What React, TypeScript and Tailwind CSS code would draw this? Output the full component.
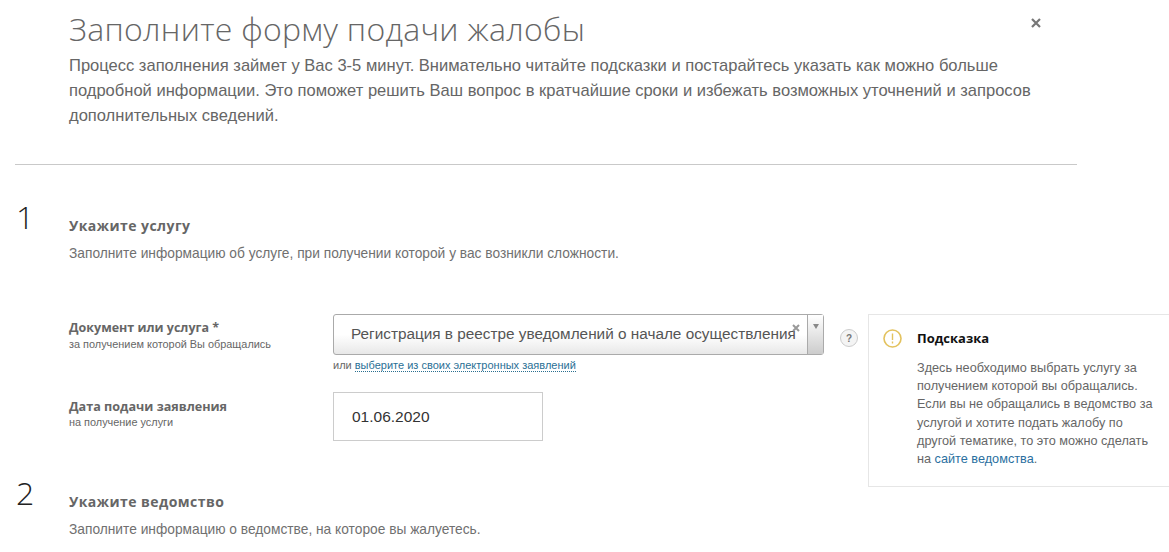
import React from "react";

const sans = "font-['Liberation_Sans',Arial,sans-serif]";
const head = "font-['Open_Sans','Noto_Sans',sans-serif]";

function SectionHead({ n, title, text }: { n: string; title: string; text: string }) {
  return (
    <div className="flex">
      <div className={`w-[69px] pl-[16px] text-[32px] leading-[32px] font-light text-[#222] ${head}`}>{n}</div>
      <div className="pt-[15px]">
        <div className={`text-[14px] leading-[20px] font-bold tracking-[0.45px] text-[#666] ${head}`}>{title}</div>
        <div className="mt-[8px] text-[13.75px] leading-[20px] text-[#707070]">{text}</div>
      </div>
    </div>
  );
}

export default function App() {
  return (
    <div className={`relative h-[552px] w-[1169px] overflow-hidden bg-white ${sans}`}>
      <header className="pl-[69px] pt-[7px]">
        <h1 className={`text-[32px] leading-[44px] font-light tracking-[0.3px] text-[#666] ${head}`}>Заполните форму подачи жалобы</h1>
        <p className="mt-[2px] whitespace-nowrap text-[16.55px] leading-[25px] text-[#666]">
          Процесс заполнения займет у Вас 3-5 минут. Внимательно читайте подсказки и постарайтесь указать как можно больше
          <br />подробной информации. Это поможет решить Ваш вопрос в кратчайшие сроки и избежать возможных уточнений и запросов
          <br />дополнительных сведений.
        </p>
      </header>
      <svg className="absolute left-[1031px] top-[18px] h-[10px] w-[10px]" viewBox="0 0 10 10" fill="none" stroke="#777" strokeWidth="2.2">
        <path d="M1 1l8 8M9 1l-8 8" />
      </svg>
      <hr className="ml-[15px] mt-[36px] w-[1062px] border-0 border-t border-[#c9c9c9]" />

      <div className="mt-[36px]">
        <SectionHead n="1" title="Укажите услугу" text="Заполните информацию об услуге, при получении которой у вас возникли сложности." />
      </div>

      <div className="mt-[50px] flex pl-[69px]">
        <div className="w-[264px] pt-[6px]">
          <div className={`text-[12.5px] leading-[16px] font-bold text-[#666] ${head}`}>Документ или услуга *</div>
          <div className="mt-[2px] text-[10.9px] leading-[13px] text-[#666]">за получением которой Вы обращались</div>
        </div>
        <div>
          <div className="relative flex h-[41px] w-[491px] rounded-[3px] border border-[#aaa] bg-gradient-to-b from-white via-white to-[#e8e8e8]">
            <div className="flex-1 overflow-hidden whitespace-nowrap pl-[17px] text-[15.33px] leading-[37px] text-[#555]">Регистрация в реестре уведомлений о начале осуществления</div>
            <div className="flex w-[16px] justify-center border-l border-[#aaa] bg-gradient-to-b from-white to-[#ccc] pt-[9px]">
              <div className="h-0 w-0 border-x-[3px] border-t-[5px] border-x-transparent border-t-[#888]" />
            </div>
            <svg className="absolute left-[458px] top-[9px] h-[8px] w-[8px]" viewBox="0 0 8 8" fill="none" stroke="#999" strokeWidth="2">
              <path d="M1 1l6 6M7 1L1 7" />
            </svg>
          </div>
          <div className="mt-[3px] text-[11px] leading-[14px] text-[#666]">
            или <span className="border-b border-dotted border-[#2a6f8f] text-[#2a6f95]">выберите из своих электронных заявлений</span>
          </div>
        </div>
        <div className="ml-[16px] mt-[15px] flex h-[18px] w-[18px] items-center justify-center rounded-full border border-[#ccc] bg-[#f4f4f4] text-[10px] font-bold text-[#777]">?</div>
      </div>

      <div className="mt-[20px] flex pl-[69px]">
        <div className="w-[264px] pt-[7px]">
          <div className={`text-[12.6px] leading-[16px] font-bold text-[#666] ${head}`}>Дата подачи заявления</div>
          <div className="mt-[1px] text-[10.9px] leading-[13px] text-[#666]">на получение услуги</div>
        </div>
        <div className="h-[49px] w-[210px] border border-[#ccc] pl-[18px] text-[15.5px] leading-[47px] text-[#333]">01.06.2020</div>
      </div>

      <div className="mt-[36px]">
        <SectionHead n="2" title="Укажите ведомство" text="Заполните информацию о ведомстве, на которое вы жалуетесь." />
      </div>

      <aside className="absolute left-[868px] top-[314px] h-[173px] w-[301px] border border-r-0 border-[#e6e6e6] bg-white pl-[48px] pt-[14px]">
        <svg className="absolute left-[14px] top-[14px] h-[19px] w-[19px]" viewBox="0 0 19 19" fill="none">
          <circle cx="9.5" cy="9.5" r="8.5" stroke="#e3c25e" strokeWidth="1.6" />
          <path d="M9.5 4.5v6.5M9.5 12.5v2" stroke="#e3c25e" strokeWidth="1.4" />
        </svg>
        <div className={`text-[13px] leading-[18px] font-bold text-[#111] ${head}`}>Подсказка</div>
        <p className="mt-[12px] whitespace-nowrap text-[12.7px] leading-[18.2px] text-[#666]">
          Здесь необходимо выбрать услугу за
          <br />получением которой вы обращались.
          <br />Если вы не обращались в ведомство за
          <br />услугой и хотите подать жалобу по
          <br />другой тематике, то это можно сделать
          <br />на <span className="text-[#2a6f9f]">сайте ведомства</span>.
        </p>
      </aside>
    </div>
  );
}
